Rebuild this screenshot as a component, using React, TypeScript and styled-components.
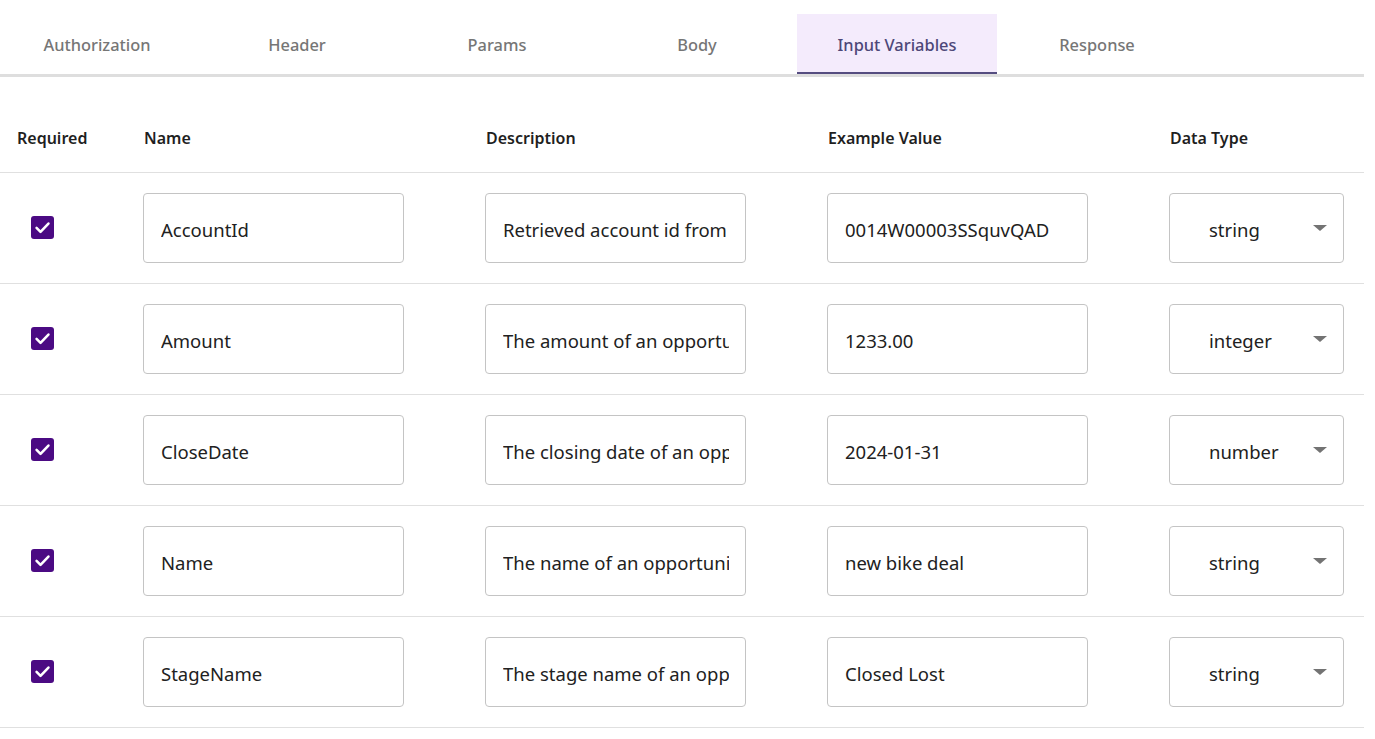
import React from "react";
import styled, { createGlobalStyle } from "styled-components";

const Global = createGlobalStyle`
  html, body { margin: 0; padding: 0; background: #fff; }
  body { font-family: "Noto Sans", "Open Sans", sans-serif; color: #212121; }
  * { box-sizing: border-box; }
`;

const Page = styled.div`
  width: 1364px;
  padding-top: 14px;
`;

const TabBar = styled.div`
  display: flex;
  border-bottom: 3px solid #dedede;
`;

const Tab = styled.div<{ $active?: boolean }>`
  width: 200px;
  height: 60px;
  display: flex;
  align-items: center;
  justify-content: center;
  font-size: 16.4px;
  font-weight: 500;
  padding-top: 3px;
  color: ${(p) => (p.$active ? "#4d4778" : "#767676")};
  background: ${(p) => (p.$active ? "#f4ebfc" : "transparent")};
  border-bottom: 2px solid ${(p) => (p.$active ? "#554d80" : "transparent")};
  &:first-child { margin-left: -3px; }
`;

const Table = styled.div`
  margin-top: 25px;
  display: grid;
  grid-template-columns: 127px 342px 342px 342px 1fr;
`;

const HeadCell = styled.div`
  height: 71px;
  display: flex;
  align-items: center;
  padding-left: 17px;
  padding-top: 2px;
  font-size: 16px;
  font-weight: 600;
  color: #1f1f1f;
  border-bottom: 1px solid #e0e0e0;
`;

const Cell = styled.div<{ $center?: boolean }>`
  height: 111px;
  display: flex;
  align-items: center;
  padding-left: ${(p) => (p.$center ? "31px" : "16px")};
  border-bottom: 1px solid #e0e0e0;
`;

const Check = styled.div`
  width: 23px;
  height: 23px;
  border-radius: 3px;
  background: #4b0a83;
  display: flex;
  align-items: center;
  justify-content: center;
  margin-top: -1px;
`;

const TextBox = styled.input`
  width: 261px;
  height: 70px;
  border: 1px solid #c4c4c4;
  border-radius: 4px;
  padding: 3px 16px 0 17px;
  font-family: "Noto Sans", "Open Sans", sans-serif;
  font-size: 18.5px;
  color: #212121;
  background: #fff;
  outline: none;
`;

const SelectBox = styled.div`
  width: 175px;
  height: 70px;
  border: 1px solid #c4c4c4;
  border-radius: 4px;
  display: flex;
  align-items: center;
  justify-content: space-between;
  padding: 3px 16px 0 39px;
  font-size: 18.5px;
  color: #212121;
`;

const Arrow = styled.span`
  width: 0;
  height: 0;
  margin-top: -4px;
  border-left: 7px solid transparent;
  border-right: 7px solid transparent;
  border-top: 6px solid #737373;
`;

const tabs = ["Authorization", "Header", "Params", "Body", "Input Variables", "Response"];

const rows = [
  { name: "AccountId", desc: "Retrieved account id from Salesforce", ex: "0014W00003SSquvQAD", type: "string" },
  { name: "Amount", desc: "The amount of an opportunity", ex: "1233.00", type: "integer" },
  { name: "CloseDate", desc: "The closing date of an opportunity", ex: "2024-01-31", type: "number" },
  { name: "Name", desc: "The name of an opportunity", ex: "new bike deal", type: "string" },
  { name: "StageName", desc: "The stage name of an opportunity", ex: "Closed Lost", type: "string" },
];

export default function App() {
  return (
    <Page>
      <Global />
      <TabBar>
        {tabs.map((t) => (
          <Tab key={t} $active={t === "Input Variables"}>{t}</Tab>
        ))}
      </TabBar>
      <Table>
        <HeadCell>Required</HeadCell>
        <HeadCell>Name</HeadCell>
        <HeadCell>Description</HeadCell>
        <HeadCell>Example Value</HeadCell>
        <HeadCell>Data Type</HeadCell>
        {rows.map((r) => (
          <React.Fragment key={r.name}>
            <Cell $center>
              <Check>
                <svg width="19" height="19" viewBox="0 0 24 24">
                  <path d="M4.5 12.5l5 5 10-10.5" fill="none" stroke="#fff" strokeWidth="3.2" strokeLinecap="round" strokeLinejoin="round" />
                </svg>
              </Check>
            </Cell>
            <Cell><TextBox readOnly defaultValue={r.name} /></Cell>
            <Cell><TextBox readOnly defaultValue={r.desc} /></Cell>
            <Cell><TextBox readOnly defaultValue={r.ex} /></Cell>
            <Cell>
              <SelectBox>
                <span>{r.type}</span>
                <Arrow />
              </SelectBox>
            </Cell>
          </React.Fragment>
        ))}
      </Table>
    </Page>
  );
}
